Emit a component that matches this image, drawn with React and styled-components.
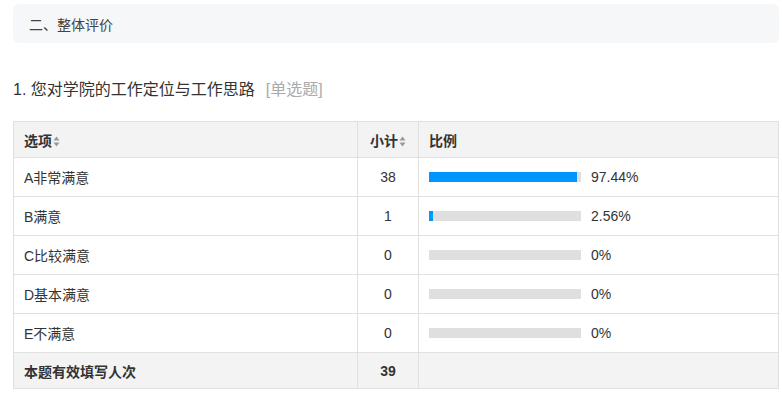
import styled, { createGlobalStyle } from 'styled-components'

// Data
const rows = [
  { label: 'A非常满意', count: 38, percent: 97.44 },
  { label: 'B满意', count: 1, percent: 2.56 },
  { label: 'C比较满意', count: 0, percent: 0 },
  { label: 'D基本满意', count: 0, percent: 0 },
  { label: 'E不满意', count: 0, percent: 0 },
]

const formatPercent = value => (value === 0 ? '0%' : `${value.toFixed(2)}%`)

// Sort arrows next to header labels
const SortIcon = () => (
  <SortSvg width="7" height="11" viewBox="0 0 7 11">
    <path d="M3.5 0.5 L6.5 4.5 L0.5 4.5 Z" fill="#999" />
    <path d="M3.5 10.5 L6.5 6.5 L0.5 6.5 Z" fill="#999" />
  </SortSvg>
)

const App = () => {
  return (
    <>
      <GlobalStyle />
      <Page>
        <SectionHeader>二、整体评价</SectionHeader>
        <Question>
          1. 您对学院的工作定位与工作思路<QuestionType>[单选题]</QuestionType>
        </Question>
        <Table>
          <colgroup>
            <col style={{ width: 344 }} />
            <col style={{ width: 61 }} />
            <col />
          </colgroup>
          <thead>
            <HeadRow>
              <HeadCell>选项<SortIcon /></HeadCell>
              <HeadCell $center>小计<SortIcon /></HeadCell>
              <HeadCell>比例</HeadCell>
            </HeadRow>
          </thead>
          <tbody>
            {rows.map(row => (
              <BodyRow key={row.label}>
                <Cell>{row.label}</Cell>
                <Cell $center>{row.count}</Cell>
                <Cell>
                  <Ratio>
                    <Track>
                      <Fill style={{ width: `${row.percent}%` }} />
                    </Track>
                    <Percent>{formatPercent(row.percent)}</Percent>
                  </Ratio>
                </Cell>
              </BodyRow>
            ))}
            <HeadRow>
              <HeadCell as="td">本题有效填写人次</HeadCell>
              <HeadCell as="td" $center>39</HeadCell>
              <HeadCell as="td" />
            </HeadRow>
          </tbody>
        </Table>
      </Page>
    </>
  )
}

// Styles
const GlobalStyle = createGlobalStyle`
  body {
    margin: 0;
    background: #fff;
    font-family: "Liberation Sans", "Noto Sans CJK SC", sans-serif;
    color: #333;
  }
`
const Page = styled.div`
  padding: 4px 3px 0 13px;
`
const SectionHeader = styled.div`
  display: flex;
  align-items: center;
  height: 39px;
  padding-left: 16px;
  background: #f6f7f9;
  border-radius: 6px;
  font-size: 14px;
  color: #444;
`
const Question = styled.div`
  margin: 35px 0 19px;
  line-height: 24px;
  font-size: 16px;
  color: #333;
`
const QuestionType = styled.span`
  margin-left: 11px;
  color: #aaa;
`
const Table = styled.table`
  width: 766px;
  table-layout: fixed;
  border-collapse: collapse;
  font-size: 14px;
`
const HeadRow = styled.tr`
  height: 36px;
  background: #f3f3f3;
`
const BodyRow = styled.tr`
  height: 39px;
`
const HeadCell = styled.th`
  padding: 0 10px;
  border: 1px solid #e0e0e0;
  text-align: ${props => (props.$center ? 'center' : 'left')};
  font-weight: bold;
  color: #333;
  white-space: nowrap;
`
const Cell = styled.td`
  padding: 0 10px;
  border: 1px solid #e0e0e0;
  text-align: ${props => (props.$center ? 'center' : 'left')};
  color: #333;
`
const SortSvg = styled.svg`
  margin-left: 1px;
  vertical-align: -1px;
`
const Ratio = styled.div`
  display: flex;
  align-items: center;
  gap: 10px;
`
const Track = styled.div`
  width: 152px;
  height: 10px;
  background: #dfdfdf;
`
const Fill = styled.div`
  height: 100%;
  background: #0095ff;
`
const Percent = styled.span`
  color: #333;
`

// Export
export default App
